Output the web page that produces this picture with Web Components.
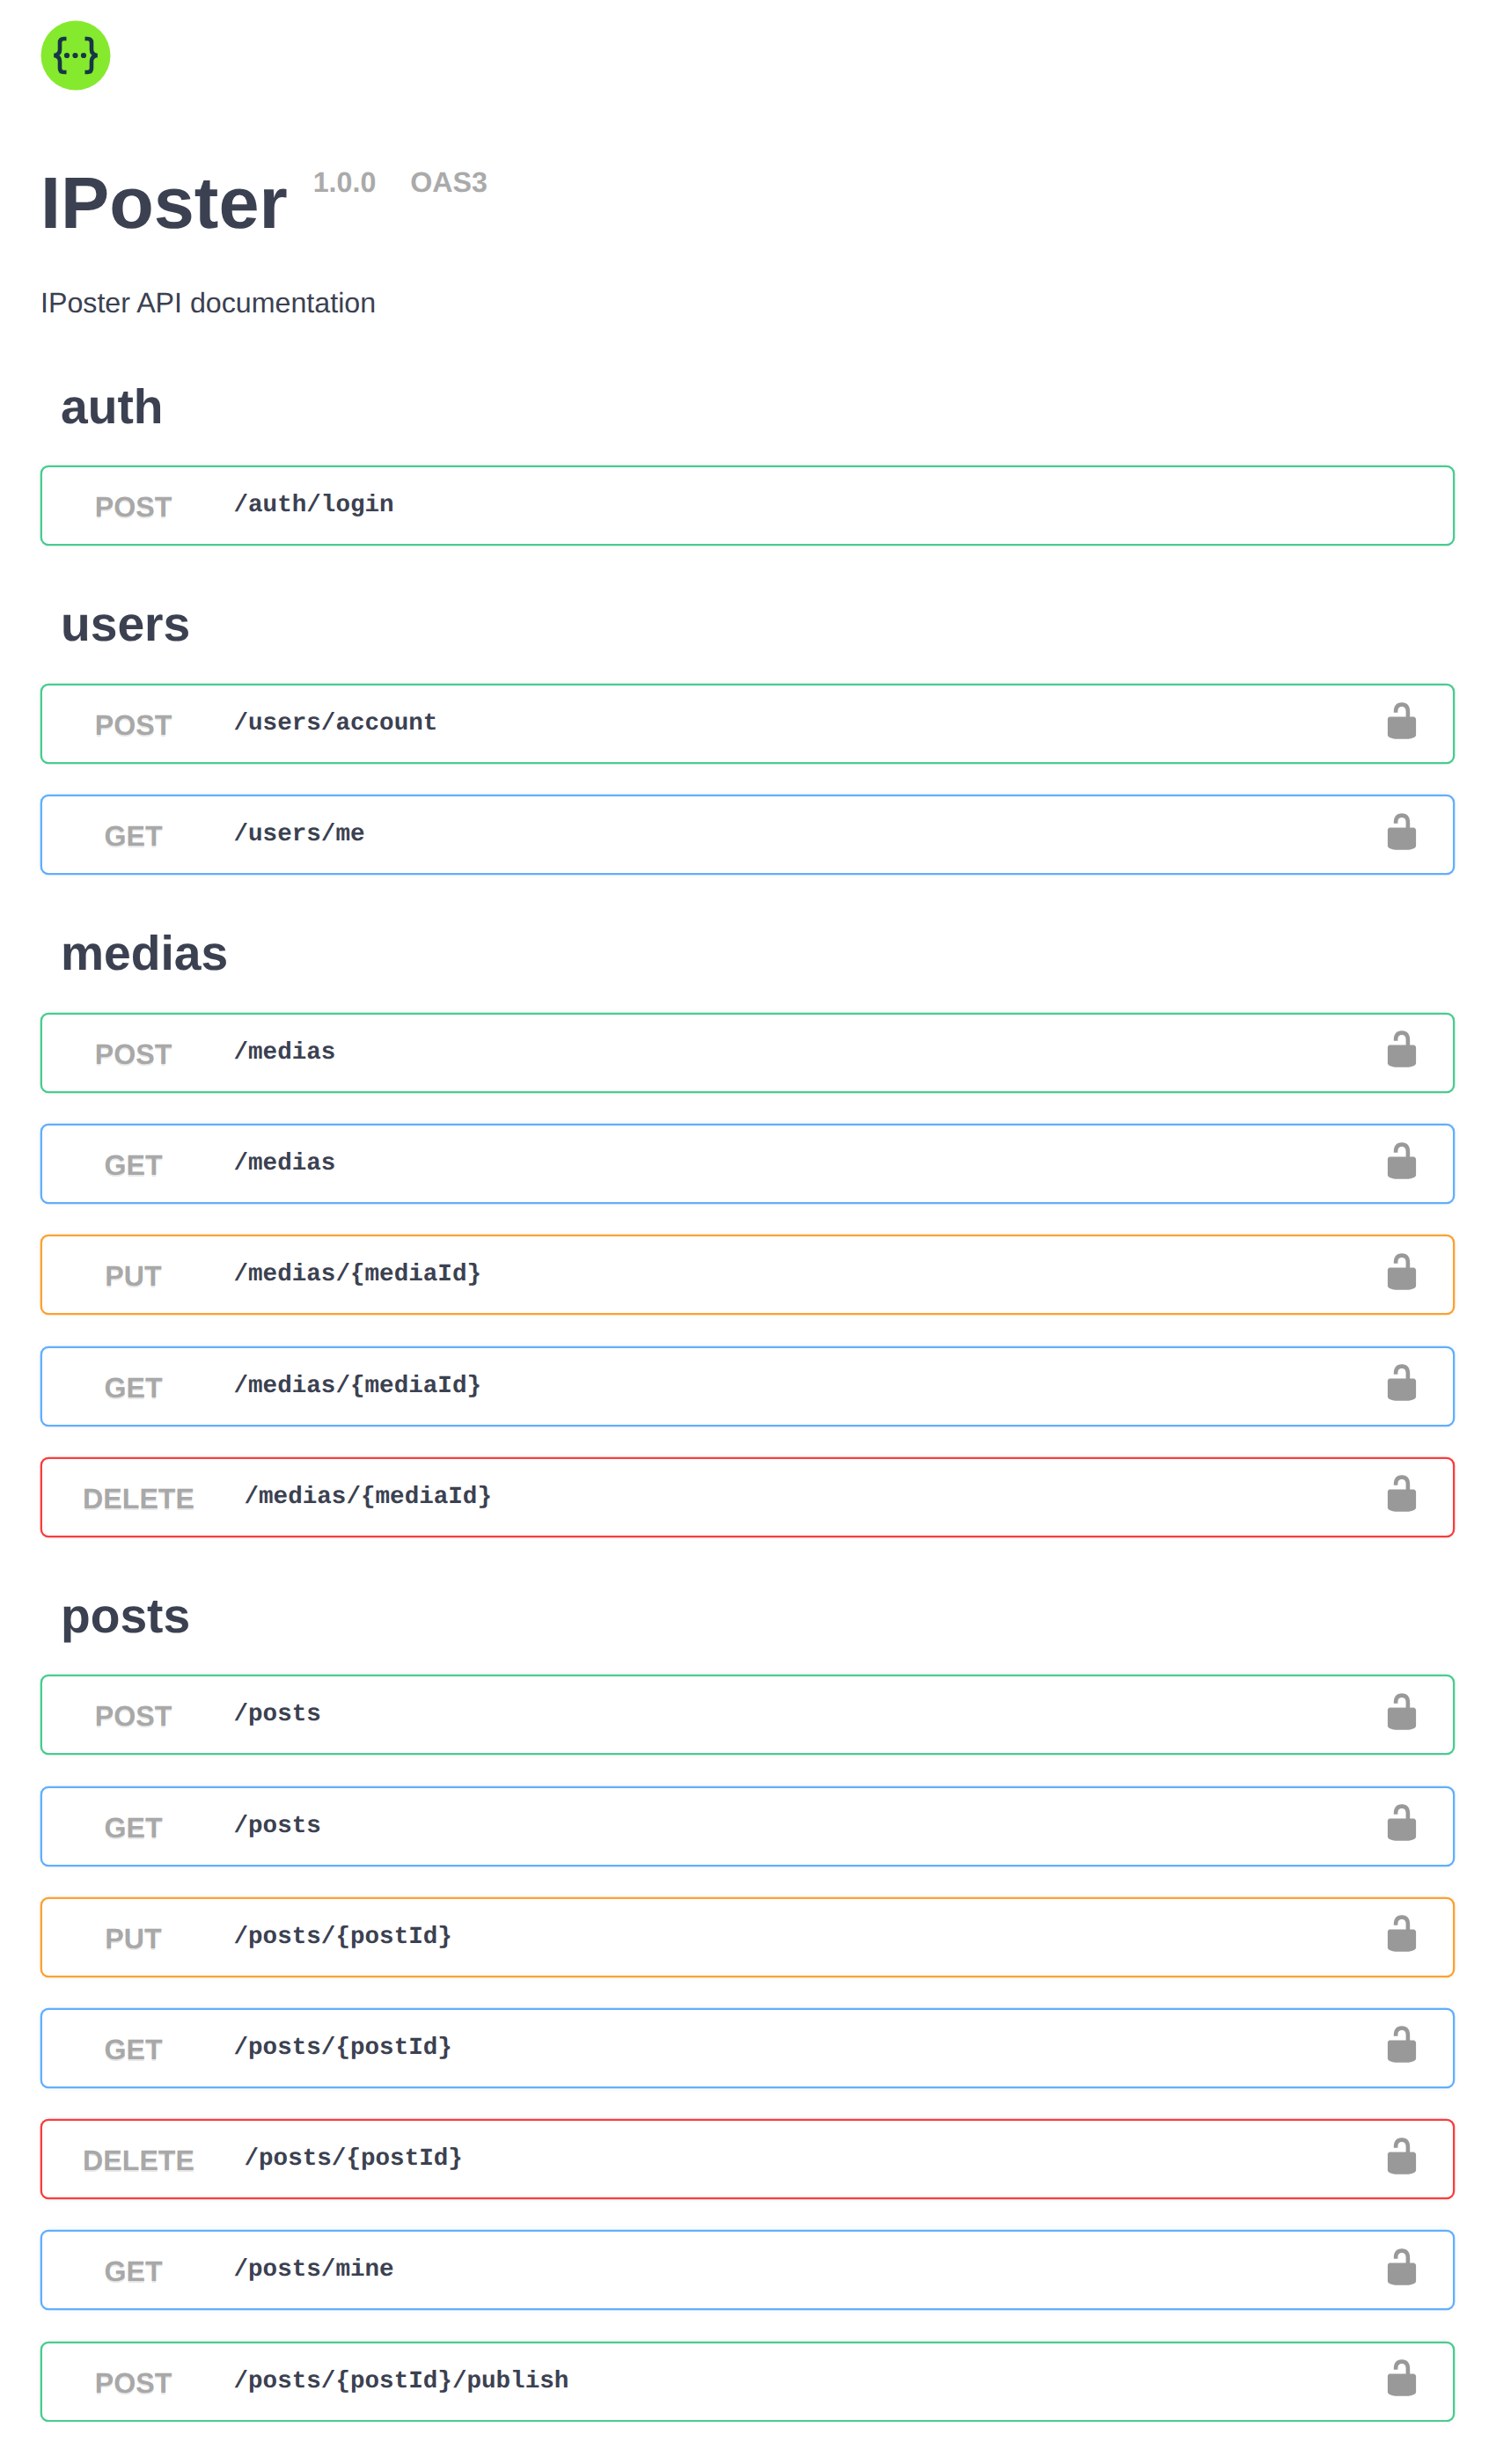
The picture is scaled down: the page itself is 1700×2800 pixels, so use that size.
<!DOCTYPE html>
<html lang="en">
<head>
<meta charset="utf-8">
<title>IPoster</title>
<style>
  html, body { margin: 0; padding: 0; background: #fff; }
  body { font-family: "Liberation Sans", Arial, sans-serif; color: #3b4151; text-rendering: geometricPrecision; }
</style>
</head>
<body>
<api-page>
  <api-info slot="info" title="IPoster" version="1.0.0" spec="OAS3" description="IPoster API documentation"></api-info>
  <api-tag name="auth">
    <api-op method="POST" path="/auth/login" open></api-op>
  </api-tag>
  <api-tag name="users">
    <api-op method="POST" path="/users/account"></api-op>
    <api-op method="GET" path="/users/me"></api-op>
  </api-tag>
  <api-tag name="medias">
    <api-op method="POST" path="/medias"></api-op>
    <api-op method="GET" path="/medias"></api-op>
    <api-op method="PUT" path="/medias/{mediaId}"></api-op>
    <api-op method="GET" path="/medias/{mediaId}"></api-op>
    <api-op method="DELETE" path="/medias/{mediaId}"></api-op>
  </api-tag>
  <api-tag name="posts">
    <api-op method="POST" path="/posts"></api-op>
    <api-op method="GET" path="/posts"></api-op>
    <api-op method="PUT" path="/posts/{postId}"></api-op>
    <api-op method="GET" path="/posts/{postId}"></api-op>
    <api-op method="DELETE" path="/posts/{postId}"></api-op>
    <api-op method="GET" path="/posts/mine"></api-op>
    <api-op method="POST" path="/posts/{postId}/publish"></api-op>
  </api-tag>
</api-page>

<script>
  // Colours of the operation border, by http method
  const METHOD_COLORS = {
    POST: '#49cc90',
    GET: '#61affe',
    PUT: '#fca130',
    DELETE: '#f93e3e',
  };

  class ApiPage extends HTMLElement {
    constructor() {
      super();
      this.attachShadow({ mode: 'open' });
      this.shadowRoot.innerHTML = `
        <style>
          :host { display: block; padding: 23px 47px 0 46px; box-sizing: border-box; }
          .logo { display: block; width: 80px; height: 80px; }
        </style>
        <svg class="logo" viewBox="0 0 80 80" aria-label="Swagger">
          <circle cx="40" cy="40" r="39.5" fill="#85ea2d"/>
          <g fill="none" stroke="#173647" stroke-width="4.6">
            <path d="M29.5 21h-3q-4.500 0-4.500 4.500v8q0 5.500-6.500 6.500q6.500 1 6.500 6.500v8q0 4.500 4.500 4.500h3"/>
            <path d="M50.500 21h3q4.500 0 4.500 4.500v8q0 5.500 6.500 6.500q-6.500 1-6.500 6.500v8q0 4.500-4.500 4.500h-3"/>
          </g>
          <g fill="#173647">
            <circle cx="30" cy="40" r="3.100"/>
            <circle cx="39.500" cy="40" r="3.100"/>
            <circle cx="49" cy="40" r="3.100"/>
          </g>
        </svg>
        <slot name="info"></slot>
        <slot></slot>
      `;
    }
  }

  class ApiInfo extends HTMLElement {
    constructor() {
      super();
      this.attachShadow({ mode: 'open' });
      this.shadowRoot.innerHTML = `
        <style>
          :host { display: block; padding: 81px 0 10.700px; }
          .title { display: flex; align-items: flex-start; }
          h1 { margin: 0; font-size: 82.800px; line-height: 94px; font-weight: 700; color: #3b4151; }
          small { font-size: 32.200px; line-height: 36px; font-weight: 700; color: #aaa; margin-top: 5px; }
          .version { margin-left: 29px; }
          .spec { margin-left: 39px; }
          p { margin: 48px 0 0; font-size: 32.200px; line-height: 36px; color: #3b4151; }
        </style>
        <div class="title">
          <h1></h1>
          <small class="version"></small>
          <small class="spec"></small>
        </div>
        <p></p>
      `;
      this.shadowRoot.querySelector('h1').textContent = this.getAttribute('title');
      this.shadowRoot.querySelector('.version').textContent = this.getAttribute('version');
      this.shadowRoot.querySelector('.spec').textContent = this.getAttribute('spec');
      this.shadowRoot.querySelector('p').textContent = this.getAttribute('description');
    }
  }

  class ApiTag extends HTMLElement {
    constructor() {
      super();
      this.attachShadow({ mode: 'open' });
      this.shadowRoot.innerHTML = `
        <style>
          :host { display: block; }
          h3 { margin: 0; padding: 59px 23px 37.700px; font-size: 55.200px; line-height: 60px; font-weight: 700; color: #3b4151; }
          .ops { display: flex; flex-direction: column; gap: 35.200px; }
        </style>
        <h3></h3>
        <div class="ops"><slot></slot></div>
      `;
      this.shadowRoot.querySelector('h3').textContent = this.getAttribute('name');
    }
  }

  class ApiOp extends HTMLElement {
    constructor() {
      super();
      this.attachShadow({ mode: 'open' });
      const method = this.getAttribute('method');
      const lock = this.hasAttribute('open') ? '' : `
        <svg class="lock" viewBox="0 0 20 20">
          <path d="M15.800 8H14V5.600C14 2.703 12.665 1 10 1 7.334 1 6 2.703 6 5.600V6h2v-.801C8 3.754 8.797 3 10 3c1.203 0 2 .754 2 2.199V8H4c-.553 0-1 .646-1 1.199V17c0 .549.428 1.139.951 1.307l1.197.387C5.672 18.861 6.550 19 7.100 19h5.800c.549 0 1.428-.139 1.951-.307l1.196-.387c.524-.167.953-.757.953-1.306V9.199C17 8.646 16.352 8 15.800 8z"/>
        </svg>`;
      const color = METHOD_COLORS[method];
      this.shadowRoot.innerHTML = `
        <style>
          :host {
            display: flex;
            align-items: center;
            box-sizing: border-box;
            height: 91px;
            padding: 0 35px 0 11.500px;
            border: 2.300px solid ${color};
            border-radius: 9.200px;
            background: #fff;
            box-shadow: 0 0 0 .3px ${color}, 0 0 7px rgba(0,0,0,.05);
          }
          .method {
            box-sizing: border-box;
            min-width: 184px;
            padding: 3px 34.500px 0;
            text-align: center;
            font-size: 32.200px;
            line-height: 36px;
            font-weight: 700;
            color: #a8a8a8;
            text-shadow: 0 2.300px 0 rgba(0,0,0,.1);
          }
          .path {
            flex: 1;
            padding: 1px 22px 0;
            font-family: "Liberation Mono", "Courier New", monospace;
            font-size: 27.600px;
            line-height: 36px;
            font-weight: 700;
            color: #3b4151;
          }
          .lock { display: block; width: 46px; height: 46px; fill: #999; margin-top: -8px; }
        </style>
        <span class="method">${method}</span>
        <span class="path">${this.getAttribute('path')}</span>
        ${lock}
      `;
    }
  }

  customElements.define('api-page', ApiPage);
  customElements.define('api-info', ApiInfo);
  customElements.define('api-tag', ApiTag);
  customElements.define('api-op', ApiOp);
</script>
</body>
</html>
